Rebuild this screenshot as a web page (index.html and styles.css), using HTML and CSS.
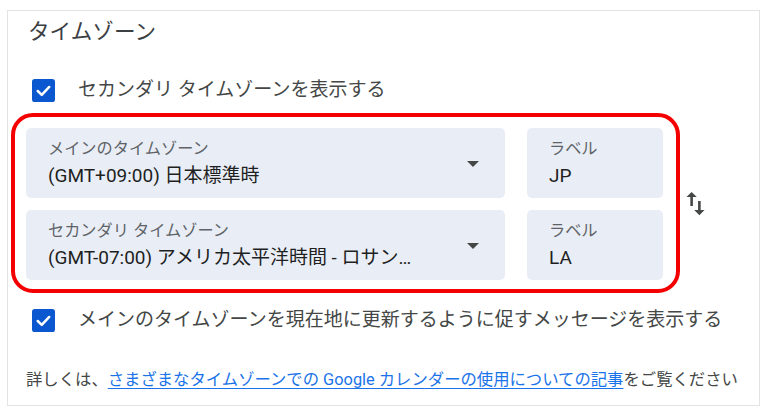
FILE: index.html
```html
<!DOCTYPE html>
<html lang="ja">
<head>
<meta charset="utf-8">
<title>タイムゾーン</title>
<link rel="stylesheet" href="styles.css">
</head>
<body>
<section class="card">
  <h2 class="title">タイムゾーン</h2>

  <label class="check-row">
    <svg class="checkbox" viewBox="0 0 24 24" width="23" height="23" aria-hidden="true">
      <rect x="0" y="0" width="24" height="24" rx="3" fill="#0b57d0"/>
      <polyline points="6,12.5 10.2,16.5 18,8.3" fill="none" stroke="#fff" stroke-width="2.6" stroke-linecap="round" stroke-linejoin="round"/>
    </svg>
    <span class="check-text">セカンダリ タイムゾーンを表示する</span>
  </label>

  <div class="tz-row">
    <div class="tz-group">
      <div class="field select">
        <div class="field-text">
          <div class="field-label">メインのタイムゾーン</div>
          <div class="field-value">(GMT+09:00) 日本標準時</div>
        </div>
        <span class="arrow"></span>
      </div>
      <div class="field">
        <div class="field-text">
          <div class="field-label">ラベル</div>
          <div class="field-value">JP</div>
        </div>
      </div>
      <div class="field select">
        <div class="field-text">
          <div class="field-label">セカンダリ タイムゾーン</div>
          <div class="field-value">(GMT-07:00) アメリカ太平洋時間 - ロサンゼルス</div>
        </div>
        <span class="arrow"></span>
      </div>
      <div class="field">
        <div class="field-text">
          <div class="field-label">ラベル</div>
          <div class="field-value">LA</div>
        </div>
      </div>
    </div>
    <svg class="swap" viewBox="0 0 24 24" width="31" height="31" aria-hidden="true">
      <path d="M16 17.01V10h-2v7.01h-3L15 21l4-3.99h-3zM9 3L5 6.99h3V14h2V6.99h3L9 3z" fill="#444746"/>
    </svg>
  </div>

  <label class="check-row second">
    <svg class="checkbox" viewBox="0 0 24 24" width="23" height="23" aria-hidden="true">
      <rect x="0" y="0" width="24" height="24" rx="3" fill="#0b57d0"/>
      <polyline points="6,12.5 10.2,16.5 18,8.3" fill="none" stroke="#fff" stroke-width="2.6" stroke-linecap="round" stroke-linejoin="round"/>
    </svg>
    <span class="check-text">メインのタイムゾーンを現在地に更新するように促すメッセージを表示する</span>
  </label>

  <p class="footer">詳しくは、<a href="#" class="link">さまざまなタイムゾーンでの Google カレンダーの使用についての記事</a>をご覧ください</p>
</section>
</body>
</html>
```

FILE: styles.css
```css
html, body {
  margin: 0;
  padding: 0;
  background: #ffffff;
}

body {
  font-family: Roboto, "Noto Sans CJK JP", "Noto Sans", sans-serif;
  color: #1f1f1f;
}

.card {
  margin: 10px 10px 0 7px;
  border: 1px solid #e3e3e3;
  padding: 7px 0 15px 0;
}

.title {
  margin: 0 0 0 20px;
  font-size: 21.6px;
  line-height: 28px;
  font-weight: 400;
  color: #3c4043;
}

.check-row {
  display: flex;
  align-items: center;
  margin: 32px 0 0 24px;
  height: 24px;
}

.check-row.second {
  margin-top: 15px;
}

.checkbox {
  flex: none;
  display: block;
}

.check-text {
  margin-left: 23px;
  font-size: 19px;
  line-height: 24px;
  color: #444746;
  white-space: nowrap;
}

.tz-row {
  display: flex;
  align-items: center;
  margin: 11px 0 0 3px;
}

.tz-group {
  display: grid;
  grid-template-columns: 479px 136px;
  column-gap: 22px;
  row-gap: 12px;
  padding: 11px 13px 9px 11px;
  border: 4px solid #f50000;
  border-radius: 22px;
}

.swap {
  display: block;
  flex: none;
  margin-left: 0;
}

.field {
  display: flex;
  align-items: center;
  height: 70px;
  box-sizing: border-box;
  padding: 11px 0 10px 22px;
  background: #e9eef6;
  border-radius: 5px;
}

.field-text {
  flex: 1;
  min-width: 0;
}

.field-label {
  font-size: 16.2px;
  line-height: 20px;
  color: #5f6368;
  white-space: nowrap;
}

.field-value {
  margin-top: 5px;
  font-size: 19px;
  line-height: 24px;
  color: #1f1f1f;
  white-space: nowrap;
  overflow: hidden;
  text-overflow: ellipsis;
}

.arrow {
  flex: none;
  width: 0;
  height: 0;
  margin: 0 26px 0 44px;
  border-left: 6.5px solid transparent;
  border-right: 6.5px solid transparent;
  border-top: 6.5px solid #444746;
}

.footer {
  margin: 38px 0 0 18px;
  font-size: 16.35px;
  line-height: 20px;
  color: #444746;
  white-space: nowrap;
}

.link {
  color: #1a73e8;
  text-decoration: underline;
  text-underline-offset: 3px;
}
```
